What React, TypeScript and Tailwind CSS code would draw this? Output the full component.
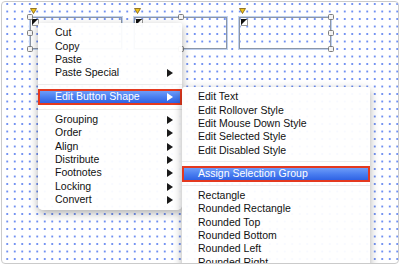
import React from "react";

type Item = { label?: string; sub?: boolean; hot?: boolean; sep?: string };

const mainMenu: Item[] = [
  { label: "Cut" },
  { label: "Copy" },
  { label: "Paste" },
  { label: "Paste Special", sub: true },
  { sep: "h-[9.5px]" },
  { label: "Edit Button Shape", sub: true, hot: true },
  { sep: "h-[8px]" },
  { label: "Grouping", sub: true },
  { label: "Order", sub: true },
  { label: "Align", sub: true },
  { label: "Distribute", sub: true },
  { label: "Footnotes", sub: true },
  { label: "Locking", sub: true },
  { label: "Convert", sub: true },
];

const shapeMenu: Item[] = [
  { label: "Edit Text" },
  { label: "Edit Rollover Style" },
  { label: "Edit Mouse Down Style" },
  { label: "Edit Selected Style" },
  { label: "Edit Disabled Style" },
  { sep: "h-[8.5px]" },
  { label: "Assign Selection Group", hot: true },
  { sep: "h-[7.5px]" },
  { label: "Rectangle" },
  { label: "Rounded Rectangle" },
  { label: "Rounded Top" },
  { label: "Rounded Bottom" },
  { label: "Rounded Left" },
  { label: "Rounded Right" },
];

const Arrow = ({ white }: { white?: boolean }) => (
  <svg width="6" height="8" viewBox="0 0 6 8" className="shrink-0">
    <path d="M0 0 L6 4 L0 8 Z" fill={white ? "#ffffff" : "#1a1a1a"} />
  </svg>
);

const MenuList = ({ items, padL }: { items: Item[]; padL: string }) => (
  <div className="flex flex-col pt-[3.5px] pb-[3.5px]">
    {items.map((it, i) => {
      if (it.sep) {
        return (
          <div key={i} className={`${it.sep} flex items-center`}>
            <div className="h-px w-full bg-[#ececec]" />
          </div>
        );
      }
      if (it.hot) {
        return (
          <div
            key={i}
            className="h-[16px] border-2 border-[#e4391f] bg-gradient-to-b from-[#6e9cf8] via-[#4a7ef0] to-[#2f62e4] flex items-center justify-between pr-[7px] text-white"
          >
            <span className={padL === "pl-[17px]" ? "pl-[15px]" : "pl-[14px]"}>{it.label}</span>
            {it.sub && <Arrow white />}
          </div>
        );
      }
      return (
        <div key={i} className={`h-[13.33px] flex items-center justify-between pr-[9px] ${padL}`}>
          <span>{it.label}</span>
          {it.sub && <Arrow />}
        </div>
      );
    })}
  </div>
);

// one button object on the canvas, with its yellow anchor marker and corner badge
const ButtonBox = ({ width }: { width: string }) => (
  <div className={`relative h-[32px] ${width} border border-[#8c96a6] shadow-[0_0_0_1px_#bed0ef]`}>
    <svg width="7" height="6" viewBox="0 0 7 6" className="absolute -left-px -top-[10px]">
      <path d="M0.5 0.5 H6.5 L3.5 5.5 Z" fill="#f0c419" stroke="#7a5a10" strokeWidth="0.8" />
    </svg>
    <svg width="7" height="7" viewBox="0 0 7 7" className="absolute left-[1px] top-[1px]">
      <rect x="0.5" y="0.5" width="6" height="6" fill="#fff" stroke="#9a9a9a" />
      <path d="M0 0 H6 L0 6 Z" fill="#111" />
    </svg>
  </div>
);

const Handle = () => (
  <div className="w-[6px] h-[6px] rounded-[1.5px] border border-[#7d7d7d] bg-[#f4f4f4]" />
);

export default function App() {
  return (
    <div className="w-[400px] h-[265px] bg-white p-[1px] overflow-hidden font-['Liberation_Sans',Arial,sans-serif] text-[10.5px] text-[#111]">
      <div className="relative h-full rounded-[4px] border border-[#cbcbcb] overflow-hidden bg-white bg-[radial-gradient(circle,#6f8ff2_0.8px,transparent_1.1px)] bg-[length:7.5px_7.5px] bg-[position:1.5px_-1.75px]">
        {/* selected group of buttons on the canvas */}
        <div className="absolute left-[28px] top-[15px] w-[301px] h-[32px]">
          <div className="flex justify-between">
            <ButtonBox width="w-[92px]" />
            <ButtonBox width="w-[93px]" />
            <ButtonBox width="w-[92px]" />
          </div>
          {/* selection handles */}
          <div className="absolute -inset-[3px] flex flex-col justify-between">
            <div className="flex justify-between">
              <Handle />
              <Handle />
              <Handle />
            </div>
            <div className="flex justify-between">
              <Handle />
              <Handle />
            </div>
            <div className="flex justify-between">
              <Handle />
              <Handle />
              <Handle />
            </div>
          </div>
        </div>

        {/* context menu */}
        <div className="absolute left-[36px] top-[21px] w-[144px] rounded-b-[5px] rounded-t-[2px] bg-white/95 shadow-[0_3px_9px_rgba(0,0,0,0.32)]">
          <MenuList items={mainMenu} padL="pl-[17px]" />
        </div>

        {/* submenu */}
        <div className="absolute left-[180px] top-[85px] w-[188px] rounded-[3px] bg-white/95 shadow-[0_3px_9px_rgba(0,0,0,0.32)]">
          <MenuList items={shapeMenu} padL="pl-[16px]" />
        </div>
      </div>
    </div>
  );
}
